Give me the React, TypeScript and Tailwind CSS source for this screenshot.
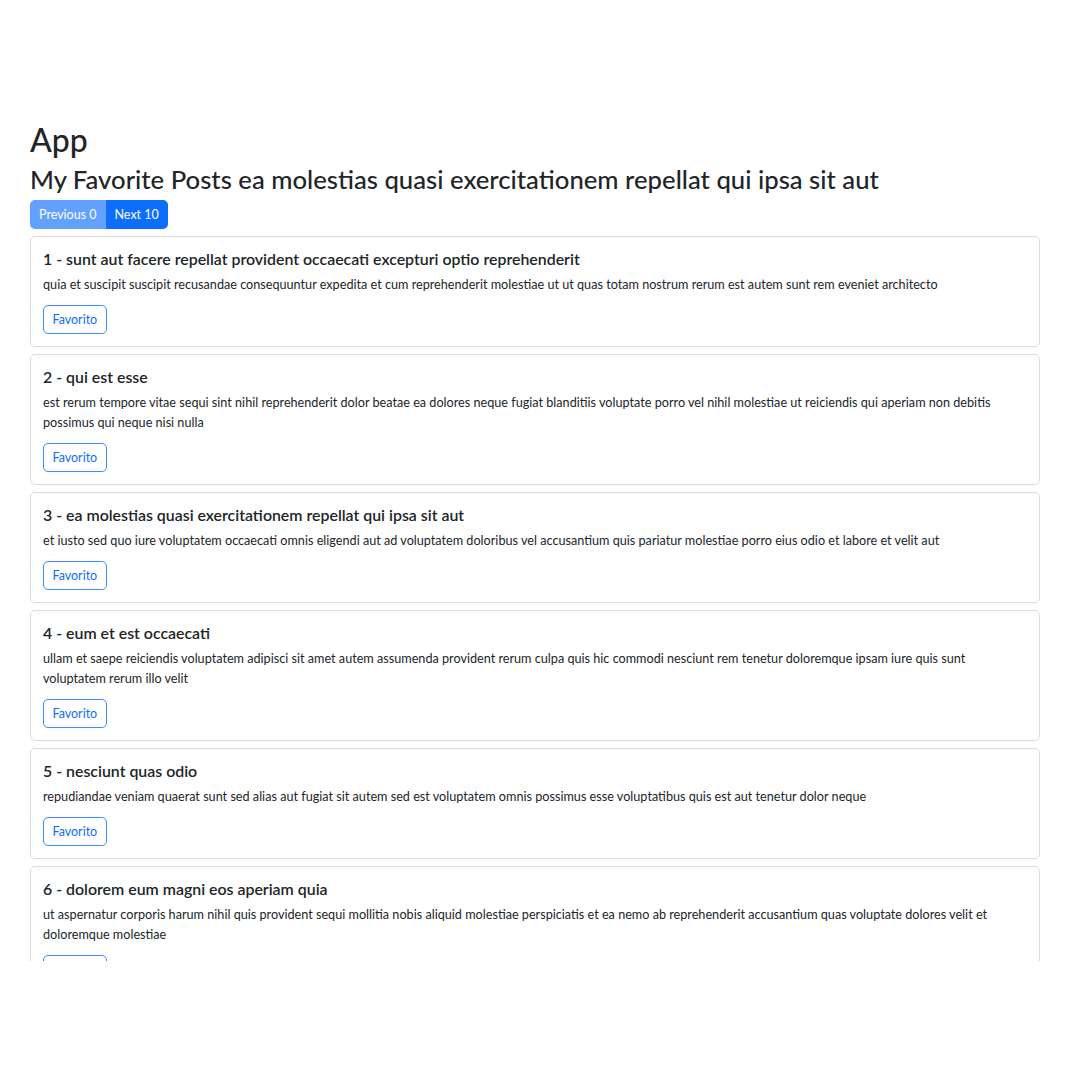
import React from "react";

const posts = [
  {
    id: 1,
    title: "sunt aut facere repellat provident occaecati excepturi optio reprehenderit",
    body: "quia et suscipit suscipit recusandae consequuntur expedita et cum reprehenderit molestiae ut ut quas totam nostrum rerum est autem sunt rem eveniet architecto",
  },
  {
    id: 2,
    title: "qui est esse",
    body: "est rerum tempore vitae sequi sint nihil reprehenderit dolor beatae ea dolores neque fugiat blanditiis voluptate porro vel nihil molestiae ut reiciendis qui aperiam non debitis possimus qui neque nisi nulla",
  },
  {
    id: 3,
    title: "ea molestias quasi exercitationem repellat qui ipsa sit aut",
    body: "et iusto sed quo iure voluptatem occaecati omnis eligendi aut ad voluptatem doloribus vel accusantium quis pariatur molestiae porro eius odio et labore et velit aut",
  },
  {
    id: 4,
    title: "eum et est occaecati",
    body: "ullam et saepe reiciendis voluptatem adipisci sit amet autem assumenda provident rerum culpa quis hic commodi nesciunt rem tenetur doloremque ipsam iure quis sunt voluptatem rerum illo velit",
  },
  {
    id: 5,
    title: "nesciunt quas odio",
    body: "repudiandae veniam quaerat sunt sed alias aut fugiat sit autem sed est voluptatem omnis possimus esse voluptatibus quis est aut tenetur dolor neque",
  },
  {
    id: 6,
    title: "dolorem eum magni eos aperiam quia",
    body: "ut aspernatur corporis harum nihil quis provident sequi mollitia nobis aliquid molestiae perspiciatis et ea nemo ab reprehenderit accusantium quas voluptate dolores velit et doloremque molestiae",
  },
];

export default function App() {
  return (
    <div
      className="h-[1080px] w-[1080px] bg-white text-[#212529]"
      style={{ fontFamily: "Lato, 'Noto Sans', sans-serif" }}
    >
      <div className="h-[961px] overflow-hidden pt-[121px] pl-[30px] pr-[40px]">
        <h1 className="text-[32px] leading-[38px] font-medium mb-[5px]">App</h1>
        <h2 className="text-[25.7px] leading-[31px] font-medium mb-[5px]">
          My Favorite Posts ea molestias quasi exercitationem repellat qui ipsa sit aut
        </h2>
        <div className="flex mb-[7px]">
          <button className="h-[29px] pt-[2px] px-[9px] text-[12.5px] text-white bg-[#62a1fe] rounded-l-[5px]">
            Previous 0
          </button>
          <button className="h-[29px] pt-[2px] px-[9px] text-[12.5px] text-white bg-[#0d6efd] rounded-r-[5px]">
            Next 10
          </button>
        </div>
        <div className="flex flex-col gap-[7px]">
          {posts.map((p) => (
            <div
              key={p.id}
              className="border border-[#dcdcdc] rounded-[5px] px-[12px] pt-[12px] pb-[12px]"
            >
              <h5 className="text-[15.9px] leading-[20px] font-semibold mb-[6px]">
                {p.id} - {p.title}
              </h5>
              <p className="text-[12.65px] leading-[20px] mb-[10px]">{p.body}</p>
              <button className="h-[29px] pt-[1px] px-[8.5px] text-[12.5px] text-[#0d6efd] border border-[#3d8bfd] rounded-[5px] bg-white">
                Favorito
              </button>
            </div>
          ))}
        </div>
      </div>
    </div>
  );
}
